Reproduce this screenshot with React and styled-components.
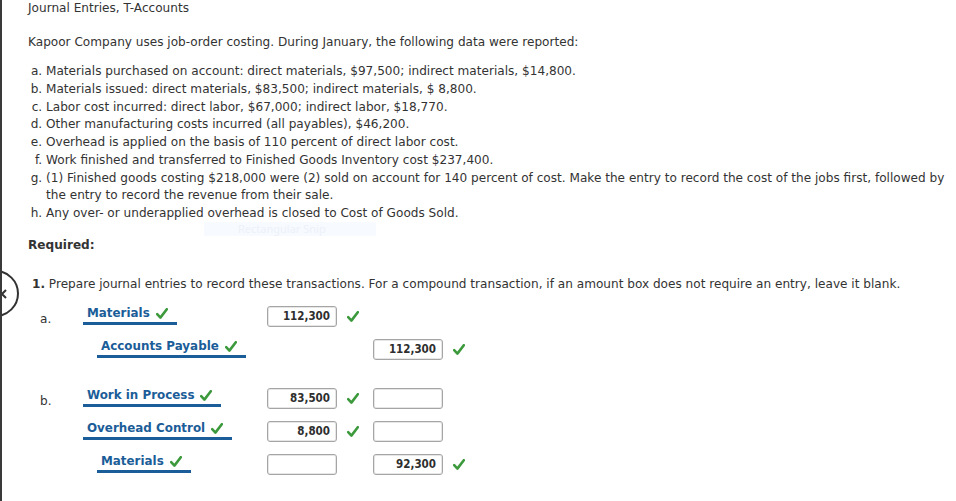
import styled, { createGlobalStyle } from 'styled-components'

const Global = createGlobalStyle`
	html, body {
		margin: 0;
		padding: 0;
		background: #fff;
	}
	body {
		font-family: 'DejaVu Sans', Verdana, sans-serif;
		font-size: 12.1px;
		color: #333;
	}
`

const Page = styled.div`
	position: relative;
	min-height: 501px;
	box-sizing: border-box;
	border-left: 2px solid #3a3a3a;
	padding: 0 4px 0 26px;
	overflow: hidden;
`

const Title = styled.div`
	line-height: 16px;
`

const Intro = styled.p`
	margin: 17px 0 0;
	line-height: 18px;
`

const Facts = styled.ol`
	margin: 12px 0 0;
	padding-left: 18px;
	line-height: 17.75px;
`

const Required = styled.div`
	margin-top: 13px;
	font-weight: 700;
	line-height: 18px;
`

const Question = styled.div`
	margin-top: 21px;
	padding-left: 4px;
	line-height: 18px;
	b {
		font-weight: 700;
	}
`

const Entries = styled.div`
	display: grid;
	grid-template-columns: 55px 184px 70px 36px 70px 24px;
	grid-template-rows: 33px 49px 33px 33px 33px;
	align-items: start;
	margin-top: 13px;
`

const Letter = styled.div`
	grid-column: 1;
	grid-row: ${p => p.$row};
	padding: 5px 0 0 12px;
	line-height: 16px;
`

const AccountCell = styled.div`
	grid-column: 2;
	grid-row: ${p => p.$row};
	padding-left: ${p => (p.$credit ? 14 : 0)}px;
`

const Account = styled.div`
	display: inline-flex;
	align-items: center;
	gap: 6px;
	padding: 0 9px 1px 4px;
	border-bottom: 3px solid #1b5d98;
	color: #1b5d98;
	font-weight: 700;
	font-size: 11.9px;
	line-height: 15px;
`

const Amount = styled.div`
	grid-column: ${p => p.$col};
	grid-row: ${p => p.$row};
	box-sizing: border-box;
	width: 70px;
	height: 21px;
	border: 1px solid #a5a5a5;
	border-radius: 3px;
	box-shadow: inset 0 0 0 1px #e6e6e6;
	text-align: right;
	padding: 0 6px;
	font-family: 'DejaVu Sans Condensed', 'DejaVu Sans', sans-serif;
	font-stretch: condensed;
	font-size: 11.5px;
	font-weight: 700;
	line-height: 19px;
	color: #2e2e2e;
`

const Mark = styled.div`
	grid-column: ${p => p.$col};
	grid-row: ${p => p.$row};
	padding: 5px 0 0 10px;
	line-height: 0;
`

const Pager = styled.div`
	position: absolute;
	left: -30px;
	top: 270px;
	width: 43px;
	height: 43px;
	border: 2.5px solid #333;
	border-radius: 50%;
	background: #fff;
	display: flex;
	align-items: center;
	justify-content: flex-end;
	box-sizing: content-box;
	svg {
		margin-right: 10px;
	}
`

const Snip = styled.div`
	position: absolute;
	left: 202px;
	top: 222px;
	width: 172px;
	height: 14px;
	background: #f7faff;
	color: #edf1f9;
	font-family: 'Noto Sans', sans-serif;
	font-size: 11px;
	line-height: 14px;
	padding-left: 34px;
	box-sizing: border-box;
	pointer-events: none;
`

function Check() {
	return (
		<svg width="12" height="11" viewBox="0 0 12 11">
			<path d="M1.2 6.2 L4.4 9.6 L10.8 1.2" fill="none" stroke="#3c9a3c" strokeWidth="2.6" strokeLinecap="round" strokeLinejoin="round" />
		</svg>
	)
}

function Entry({ name, row, credit }) {
	return (
		<AccountCell $row={row} $credit={credit}>
			<Account>
				{name}
				<Check />
			</Account>
		</AccountCell>
	)
}

const facts = [
	'Materials purchased on account: direct materials, $97,500; indirect materials, $14,800.',
	'Materials issued: direct materials, $83,500; indirect materials, $ 8,800.',
	'Labor cost incurred: direct labor, $67,000; indirect labor, $18,770.',
	'Other manufacturing costs incurred (all payables), $46,200.',
	'Overhead is applied on the basis of 110 percent of direct labor cost.',
	'Work finished and transferred to Finished Goods Inventory cost $237,400.',
	'(1) Finished goods costing $218,000 were (2) sold on account for 140 percent of cost. Make the entry to record the cost of the jobs first, followed by the entry to record the revenue from their sale.',
	'Any over- or underapplied overhead is closed to Cost of Goods Sold.',
]

export default function App() {
	return (
		<Page>
			<Global />
			<Title>Journal Entries, T-Accounts</Title>
			<Intro>Kapoor Company uses job-order costing. During January, the following data were reported:</Intro>
			<Facts type="a">
				{facts.map(f => (
					<li key={f}>{f}</li>
				))}
			</Facts>
			<Required>Required:</Required>
			<Question>
				<b>1.</b> Prepare journal entries to record these transactions. For a compound transaction, if an amount box does not require an entry, leave it blank.
			</Question>
			<Entries>
				<Letter $row={1}>a.</Letter>
				<Entry name="Materials" row={1} />
				<Amount $col={3} $row={1}>112,300</Amount>
				<Mark $col={4} $row={1}><Check /></Mark>

				<Entry name="Accounts Payable" row={2} credit />
				<Amount $col={5} $row={2}>112,300</Amount>
				<Mark $col={6} $row={2}><Check /></Mark>

				<Letter $row={3}>b.</Letter>
				<Entry name="Work in Process" row={3} />
				<Amount $col={3} $row={3}>83,500</Amount>
				<Mark $col={4} $row={3}><Check /></Mark>
				<Amount $col={5} $row={3} />

				<Entry name="Overhead Control" row={4} />
				<Amount $col={3} $row={4}>8,800</Amount>
				<Mark $col={4} $row={4}><Check /></Mark>
				<Amount $col={5} $row={4} />

				<Entry name="Materials" row={5} credit />
				<Amount $col={3} $row={5} />
				<Amount $col={5} $row={5}>92,300</Amount>
				<Mark $col={6} $row={5}><Check /></Mark>
			</Entries>
			<Pager>
				<svg width="6" height="10" viewBox="0 0 6 10">
					<path d="M5 1 L1 5 L5 9" fill="none" stroke="#333" strokeWidth="2" />
				</svg>
			</Pager>
			<Snip>Rectangular Snip</Snip>
		</Page>
	)
}
